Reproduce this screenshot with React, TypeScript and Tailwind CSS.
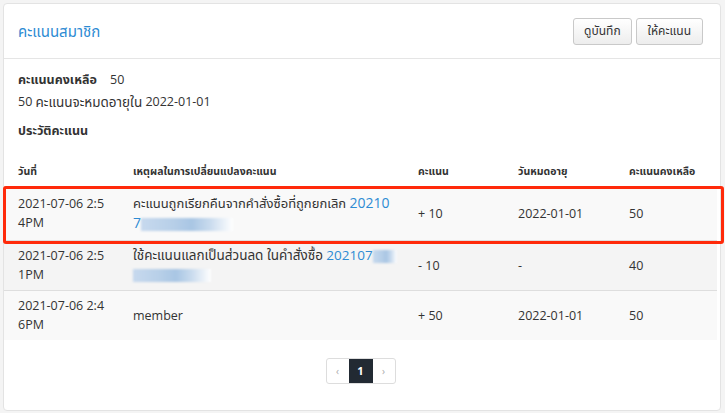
import React from "react";

const font = { fontFamily: '"Open Sans", "Noto Sans Thai", "Noto Sans", "Liberation Sans", sans-serif' };

function Blur({ w }: { w: number }) {
  return (
    <span
      className="inline-block h-[13px] align-middle bg-[linear-gradient(90deg,#c7d9ee_0%,#b7cfe8_35%,#a9c6e4_55%,#c9dbee_75%,#ffffff_100%)] blur-[1px]"
      style={{ width: w }}
    />
  );
}

export default function App() {
  return (
    <div className="min-h-[413px] w-[725px] bg-[#f4f4f4] pt-[3px] pl-[3px]" style={font}>
      <div className="relative w-[718px] h-[408px] bg-white border border-[#e3e3e3] rounded-[4px] flex flex-col">
        {/* header */}
        <div className="h-[55px] border-b border-[#e5e5e5] flex items-center justify-between pl-[14px] pr-[17px]">
          <div className="text-[15px] text-[#2d8bd3] pt-[1px]">คะแนนสมาชิก</div>
          <div className="flex gap-[4px]">
            <button className="h-[27px] px-[10px] text-[12px] text-[#333] border border-[#c9c9c9] rounded-[3px] bg-[linear-gradient(#ffffff,#ededed)]">ดูบันทึก</button>
            <button className="h-[27px] px-[11px] text-[12px] text-[#333] border border-[#c9c9c9] rounded-[3px] bg-[linear-gradient(#ffffff,#ededed)]">ให้คะแนน</button>
          </div>
        </div>
        {/* summary */}
        <div className="pl-[14px] pt-[11px] text-[12.5px] text-[#333]">
          <div className="h-[21px] flex items-center">
            <span className="font-bold w-[92px]">คะแนนคงเหลือ</span>
            <span>50</span>
          </div>
          <div className="h-[22px] flex items-center">
            50&nbsp;<span className="text-[13.5px]">คะแนนจะหมดอายุใน</span>&nbsp;2022-01-01
          </div>
          <div className="h-[20px] mt-[8px] flex items-center font-bold">ประวัติคะแนน</div>
        </div>
        {/* table */}
        <table className="mt-[17px] w-[713px] table-fixed border-collapse text-[12.5px] text-[#333]">
          <colgroup>
            <col className="w-[115px]" />
            <col className="w-[285px]" />
            <col className="w-[100px]" />
            <col className="w-[111px]" />
            <col className="w-[102px]" />
          </colgroup>
          <thead>
            <tr className="h-[28px] text-[10.5px] font-bold text-[#333] text-left">
              <th className="pl-[14px] pb-[6px] align-bottom font-bold">วันที่</th>
              <th className="pl-[14px] pb-[6px] align-bottom font-bold">เหตุผลในการเปลี่ยนแปลงคะแนน</th>
              <th className="pl-[14px] pb-[6px] align-bottom font-bold">คะแนน</th>
              <th className="pl-[14px] pb-[6px] align-bottom font-bold">วันหมดอายุ</th>
              <th className="pl-[14px] pb-[6px] align-bottom font-bold">คะแนนคงเหลือ</th>
            </tr>
          </thead>
          <tbody>
            <tr className="h-[54px] bg-[#f9f9f9] border-t border-b border-[#dedede] leading-[19px]">
              <td className="pl-[14px]">2021-07-06 2:5<br />4PM</td>
              <td className="pl-[14px]">
                <span className="text-[13px]">คะแนนถูกเรียกคืนจากคำสั่งซื้อที่ถูกยกเลิก</span>{" "}
                <span className="text-[#2d8bd3] text-[14px]">20210</span>
                <br />
                <span className="text-[#2d8bd3] text-[14px]">7</span>
                <Blur w={92} />
              </td>
              <td className="pl-[14px]">+ 10</td>
              <td className="pl-[14px]">2022-01-01</td>
              <td className="pl-[14px]">50</td>
            </tr>
            <tr className="h-[50px] bg-[#f4f4f4] border-b border-[#dedede] leading-[19px]">
              <td className="pl-[14px]">2021-07-06 2:5<br />1PM</td>
              <td className="pl-[14px]">
                <span className="text-[13.5px]">ใช้คะแนนแลกเป็นส่วนลด ในคำสั่งซื้อ</span>{" "}
                <span className="text-[#2d8bd3] text-[13.5px]">202107</span>
                <Blur w={24} />
                <br />
                <Blur w={78} />
              </td>
              <td className="pl-[14px]">- 10</td>
              <td className="pl-[14px]">-</td>
              <td className="pl-[14px]">40</td>
            </tr>
            <tr className="h-[50px] bg-[#f9f9f9] leading-[19px]">
              <td className="pl-[14px]">2021-07-06 2:4<br />6PM</td>
              <td className="pl-[14px]">member</td>
              <td className="pl-[14px]">+ 50</td>
              <td className="pl-[14px]">2022-01-01</td>
              <td className="pl-[14px]">50</td>
            </tr>
          </tbody>
        </table>
        {/* pagination */}
        <div className="flex justify-center mt-[18px] ml-[-3px]">
          <div className="flex h-[26px] border border-[#dddddd] rounded-[3px] overflow-hidden text-[11px]">
            <span className="w-[22px] flex items-center justify-center text-[#aaa] text-[10px]">‹</span>
            <span className="w-[24px] flex items-center justify-center bg-[#222a33] text-white font-bold">1</span>
            <span className="w-[22px] flex items-center justify-center text-[#aaa] text-[10px]">›</span>
          </div>
        </div>
        {/* annotation */}
        <div className="absolute left-[-1px] top-[182px] w-[721px] h-[58px] border-[3px] border-[#ff2a0a] rounded-[3px] pointer-events-none" />
      </div>
    </div>
  );
}
